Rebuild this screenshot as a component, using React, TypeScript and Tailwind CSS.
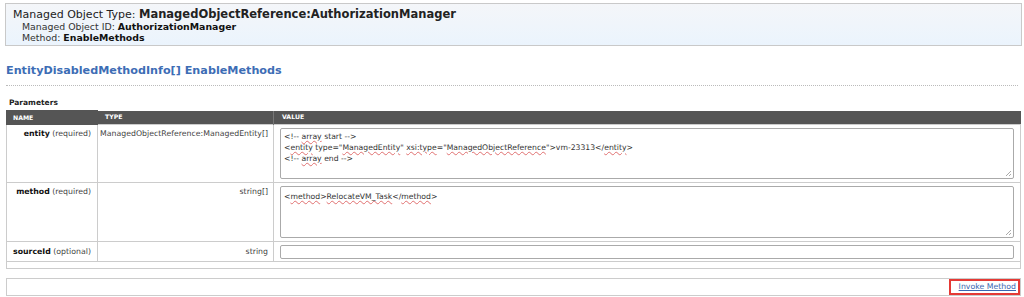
import React from "react";

const Squiggle: React.FC<{ children: React.ReactNode }> = ({ children }) => (
  <span className="underline decoration-wavy decoration-[#e07070] decoration-[0.5px] underline-offset-[1px]">
    {children}
  </span>
);

const Grip = () => (
  <svg
    className="absolute right-[1px] bottom-[1px]"
    width="7"
    height="7"
    viewBox="0 0 7 7"
  >
    <path d="M6 1L1 6M6 4L4 6" stroke="#aaa" strokeWidth="1" />
  </svg>
);

const App: React.FC = () => {
  return (
    <div className="w-[1024px] h-[297px] bg-white overflow-hidden font-['DejaVu_Sans',Verdana,sans-serif] text-[#222]">
      {/* Object header */}
      <div className="mt-[3px] ml-[5px] w-[1017px] h-[43px] border border-[#c9c9c9] bg-gradient-to-b from-[#f4f6f9] to-[#ebf4fd] pl-[7px] pt-[4px]">
        <div className="text-[11px] leading-[13px]">
          Managed Object Type:{" "}
          <span className="font-bold text-[11.5px]">
            ManagedObjectReference:AuthorizationManager
          </span>
        </div>
        <div className="pl-[9px] text-[9.4px] leading-[11px] text-[#333]">
          Managed Object ID:{" "}
          <span className="font-bold text-[#111]">AuthorizationManager</span>
        </div>
        <div className="pl-[9px] text-[9.4px] leading-[11px] text-[#333]">
          Method: <span className="font-bold text-[#111]">EnableMethods</span>
        </div>
      </div>

      {/* Method title */}
      <div className="mt-[17px] mx-[6px] pb-[6px] border-b border-dotted border-[#bbb]">
        <h1 className="text-[11.2px] leading-[16px] font-bold text-[#3d6db5]">
          EntityDisabledMethodInfo[] EnableMethods
        </h1>
      </div>

      <div className="mt-[12px] ml-[9px] text-[7.5px] leading-[10px] font-bold">
        Parameters
      </div>

      {/* Parameters table */}
      <table className="ml-[6px] mt-[2px] w-[1015px] border-collapse table-fixed text-[7.8px] leading-[10px] text-[#444]">
        <colgroup>
          <col className="w-[91px]" />
          <col className="w-[176px]" />
          <col />
        </colgroup>
        <thead>
          <tr className="h-[14px] bg-[#555] text-white text-[6.2px] font-bold uppercase text-left">
            <th className="pl-[6px] border border-[#555]">Name</th>
            <th className="pl-[7px] border-l border-[#777]">Type</th>
            <th className="pl-[8px] border-l border-[#777]">Value</th>
          </tr>
        </thead>
        <tbody>
          <tr className="h-[57px] align-top">
            <td className="border border-[#ccc] text-right pr-[6px] pt-[4px] whitespace-nowrap">
              <span className="font-bold text-[#111]">entity</span> (required)
            </td>
            <td className="border border-[#ccc] text-right pr-[5px] pt-[4px] whitespace-nowrap">
              ManagedObjectReference:ManagedEntity[]
            </td>
            <td className="border border-[#ccc] px-[6px] py-[3px]">
              <div className="relative h-[51px] border border-[#aaa] rounded-[2px] px-[3px] pt-[2px] text-[7.7px] leading-[11px] text-[#333]">
                <div>
                  &lt;!-- <Squiggle>array</Squiggle> start --&gt;
                </div>
                <div>
                  &lt;<Squiggle>entity</Squiggle> type="
                  <Squiggle>ManagedEntity</Squiggle>"{" "}
                  <Squiggle>xsi:type</Squiggle>="
                  <Squiggle>ManagedObjectReference</Squiggle>"&gt;vm-23313&lt;/
                  <Squiggle>entity</Squiggle>&gt;
                </div>
                <div>
                  &lt;!-- <Squiggle>array</Squiggle> end --&gt;
                </div>
                <Grip />
              </div>
            </td>
          </tr>
          <tr className="h-[59px] align-top">
            <td className="border border-[#ccc] text-right pr-[6px] pt-[4px] whitespace-nowrap">
              <span className="font-bold text-[#111]">method</span> (required)
            </td>
            <td className="border border-[#ccc] text-right pr-[5px] pt-[4px]">
              string[]
            </td>
            <td className="border border-[#ccc] px-[6px] py-[3px]">
              <div className="relative h-[52px] border border-[#aaa] rounded-[2px] px-[3px] pt-[4px] text-[7.7px] leading-[11px] text-[#333]">
                &lt;<Squiggle>method</Squiggle>&gt;
                <Squiggle>RelocateVM_Task</Squiggle>&lt;/
                <Squiggle>method</Squiggle>&gt;
                <Grip />
              </div>
            </td>
          </tr>
          <tr className="h-[20px]">
            <td className="border border-[#ccc] text-right pr-[6px] whitespace-nowrap">
              <span className="font-bold text-[#111]">sourceId</span> (optional)
            </td>
            <td className="border border-[#ccc] text-right pr-[5px]">string</td>
            <td className="border border-[#ccc] px-[6px]">
              <div className="h-[14px] border border-[#aaa] rounded-[2px]" />
            </td>
          </tr>
          <tr className="h-[7px]">
            <td colSpan={3} className="border border-[#ccc]" />
          </tr>
        </tbody>
      </table>

      {/* Invoke footer */}
      <div className="mt-[9px] ml-[6px] w-[1015px] h-[18px] border border-[#ccc] flex justify-end items-center">
        <a
          href="#"
          className="h-[16px] pl-[8px] pr-[2px] flex items-center border-2 border-[#e53935] text-[7.8px] text-[#3a66b0] underline"
        >
          Invoke Method
        </a>
      </div>
    </div>
  );
};

export default App;
